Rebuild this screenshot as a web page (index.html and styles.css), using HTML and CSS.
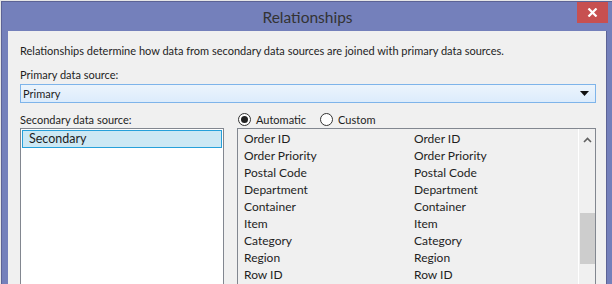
FILE: index.html
```html
<!DOCTYPE html>
<html lang="en">
<head>
    <meta charset="UTF-8">
    <title>Relationships</title>
    <link rel="stylesheet" href="styles.css">
</head>
<body>
    <div class="desktop">
        <div class="window">
            <div class="titlebar">
                <span></span>
                <span class="title">Relationships</span>
                <button class="close" aria-label="Close">
                    <svg width="11" height="9" viewBox="0 0 11 9"><path d="M1.5 0.5 L9.5 8.5 M9.5 0.5 L1.5 8.5" stroke="#fff" stroke-width="2.2" fill="none"/></svg>
                </button>
            </div>

            <div class="content">
                <p class="intro">Relationships determine how data from secondary data sources are joined with primary data sources.</p>

                <label class="label">Primary data source:</label>
                <div class="combo">
                    <span>Primary</span>
                    <svg width="9" height="5" viewBox="0 0 9 5"><path d="M0 0 H9 L4.5 5 Z" fill="#111"/></svg>
                </div>

                <div class="bottom">
                    <div class="left">
                        <label class="label">Secondary data source:</label>
                        <div class="listbox">
                            <div class="item selected">Secondary</div>
                        </div>
                    </div>

                    <div class="right">
                        <div class="radios">
                            <span class="radio on"><i></i>Automatic</span>
                            <span class="radio"><i></i>Custom</span>
                        </div>
                        <div class="fields">
                            <div class="columns">
                                <div class="col">
                                    <div>Order ID</div>
                                    <div>Order Priority</div>
                                    <div>Postal Code</div>
                                    <div>Department</div>
                                    <div>Container</div>
                                    <div>Item</div>
                                    <div>Category</div>
                                    <div>Region</div>
                                    <div>Row ID</div>
                                </div>
                                <div class="col">
                                    <div>Order ID</div>
                                    <div>Order Priority</div>
                                    <div>Postal Code</div>
                                    <div>Department</div>
                                    <div>Container</div>
                                    <div>Item</div>
                                    <div>Category</div>
                                    <div>Region</div>
                                    <div>Row ID</div>
                                </div>
                            </div>
                            <div class="scrollbar">
                                <svg width="9" height="6" viewBox="0 0 9 6"><path d="M1 5 L4.5 1.5 L8 5" stroke="#606060" stroke-width="1.6" fill="none"/></svg>
                                <div class="thumb"></div>
                            </div>
                        </div>
                    </div>
                </div>
            </div>
        </div>
    </div>
</body>
</html>
```

FILE: styles.css
```css
/* Grundlayout */
body {
    margin: 0;
    font-family: Lato, "Noto Sans", sans-serif;
    font-size: 11px;
    color: #1e1e1e;
    overflow: hidden;
}

.desktop {
    background-color: #e6e6e6;
    height: 283px;
    padding: 1px 0 0 1px;
    overflow: hidden;
}

/* Fensterrahmen */
.window {
    background-color: #7480bb;
    border-top: 1px solid #5c6395;
    border-left: 1px solid #5c6395;
    padding: 0 5px 0 6px;
    height: 282px;
}

.titlebar {
    display: grid;
    grid-template-columns: 1fr auto 1fr;
    height: 29px;
}

.title {
    font-size: 15.5px;
    color: #333;
    line-height: 27px;
    padding-top: 2px;
}

.close {
    justify-self: end;
    width: 31px;
    height: 21px;
    margin-right: -1px;
    border: none;
    padding: 0;
    background-color: #c75050;
    display: flex;
    align-items: center;
    justify-content: center;
}

/* Inhalt */
.content {
    background-color: #f0f0f0;
    border-right: 1px solid #5c6395;
    padding: 11px 10px 0 12px;
    height: 242px;
}

.intro {
    margin: 0 0 7px;
    line-height: 17px;
}

.label {
    display: block;
    line-height: 17px;
}

.combo {
    margin-top: 1px;
    height: 17px;
    border: 1px solid #7eb4ea;
    background: linear-gradient(#ecf4fc, #dcecfc);
    display: flex;
    align-items: center;
    justify-content: space-between;
    padding: 0 6px 0 2px;
    line-height: 17px;
}

.bottom {
    display: flex;
    gap: 13px;
    margin-top: 8px;
}

.left {
    width: 204px;
}

.listbox {
    height: 160px;
    border: 1px solid #828790;
    background-color: #fff;
    padding: 1px;
}

.item {
    height: 16px;
    line-height: 16px;
    padding-left: 6px;
    font-size: 12.5px;
}

.item.selected {
    background-color: #cce8f4;
    border: 1px solid #26a0da;
}

.right {
    flex: 1;
}

.radios {
    display: flex;
    gap: 14px;
    height: 17px;
    align-items: center;
    padding-left: 1px;
}

.radio {
    display: flex;
    align-items: center;
    gap: 5px;
    line-height: 17px;
}

.radio i {
    width: 13px;
    height: 13px;
    border: 1px solid #333;
    border-radius: 50%;
    background-color: #fff;
    box-sizing: border-box;
    display: flex;
    align-items: center;
    justify-content: center;
}

.radio.on i::after {
    content: "";
    width: 7px;
    height: 7px;
    border-radius: 50%;
    background-color: #222;
}

.fields {
    height: 160px;
    border: 1px solid #828790;
    display: flex;
    font-size: 12px;
}

.columns {
    flex: 1;
    display: grid;
    grid-template-columns: 170px 1fr;
    padding: 1px 0 0 6px;
}

.col div {
    height: 17px;
    line-height: 17px;
}

.scrollbar {
    width: 16px;
    border-left: 1px solid #fff;
    display: flex;
    flex-direction: column;
    align-items: center;
    padding-top: 8px;
}

.thumb {
    width: 15px;
    height: 51px;
    margin-top: 70px;
    background-color: #cdcdcd;
}
```
